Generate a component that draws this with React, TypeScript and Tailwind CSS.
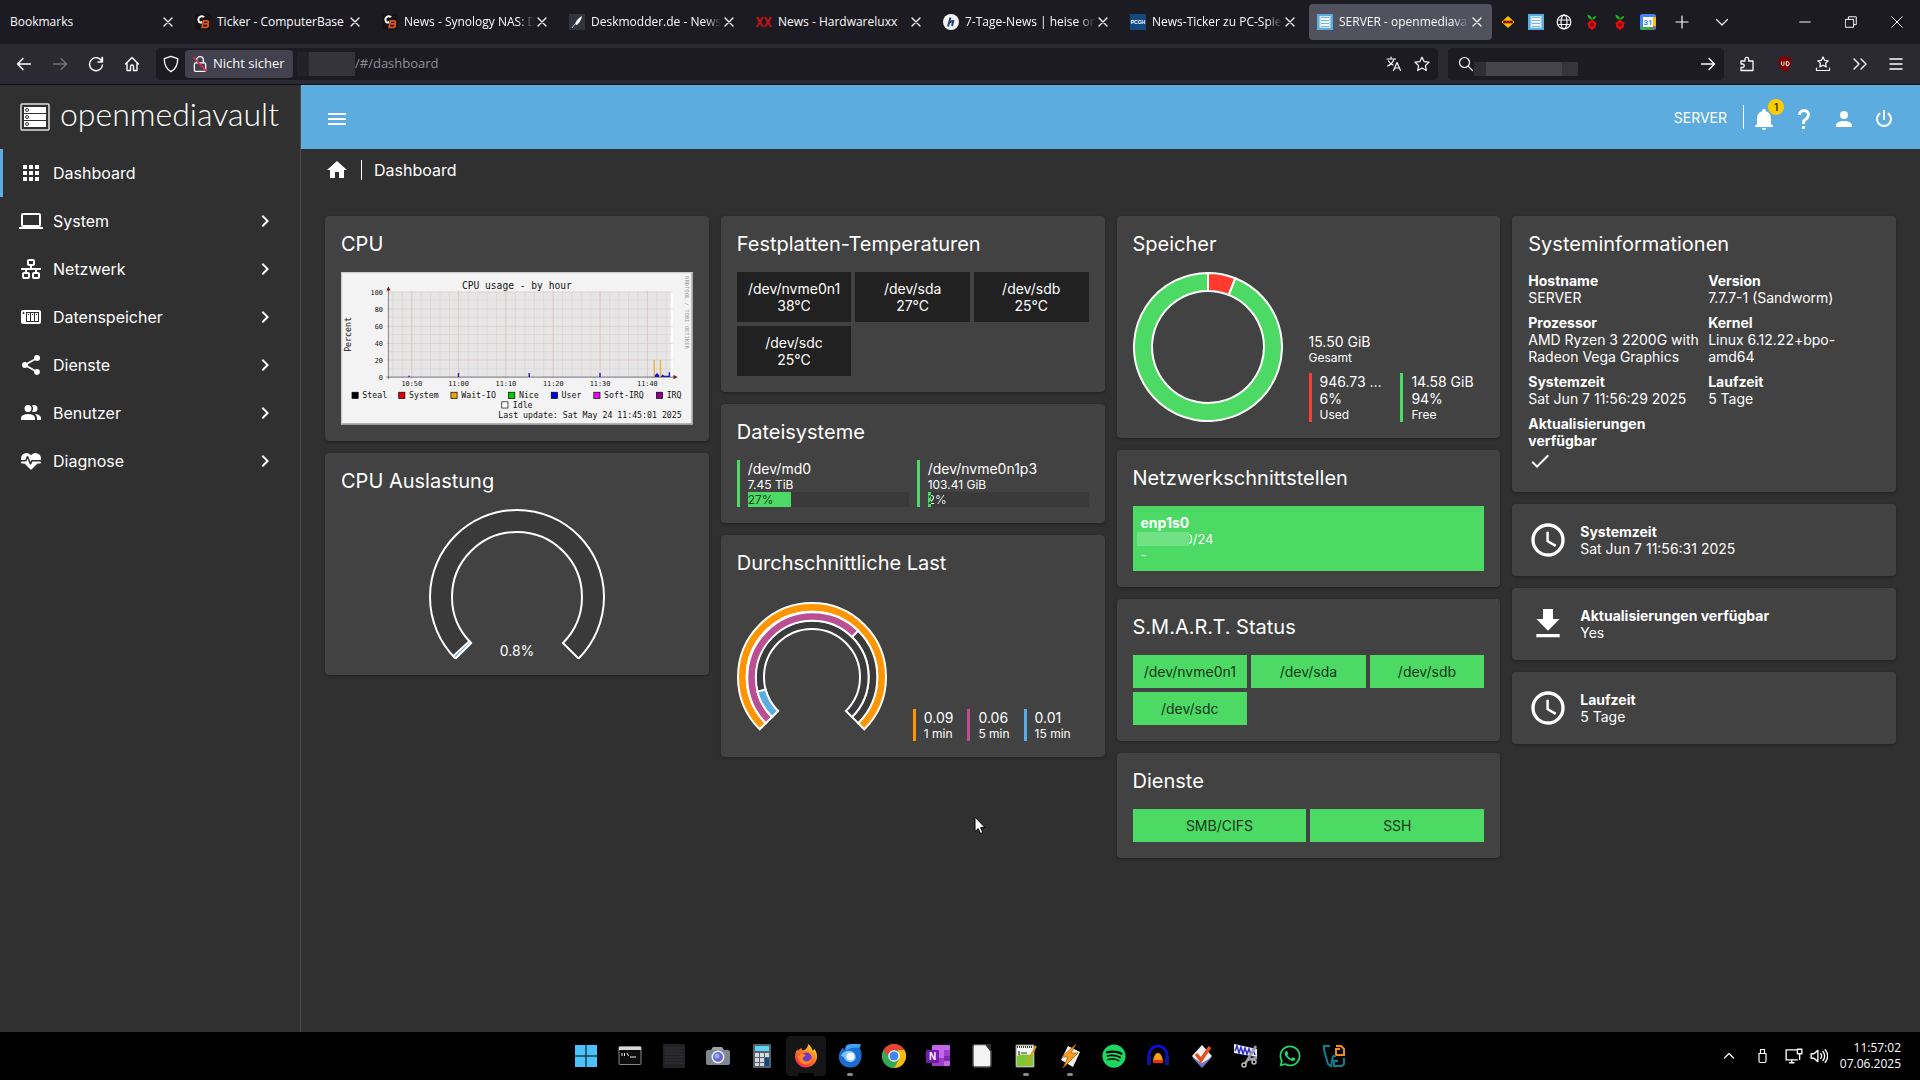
import React from "react";
import { FaSpotify, FaWhatsapp } from "react-icons/fa";

const P = {
  apps: "M16,20H20V16H16M16,14H20V10H16M10,8H14V4H10M16,8H20V4H16M10,14H14V10H10M4,14H8V10H4M4,20H8V16H4M10,20H14V16H10M4,8H8V4H4V8Z",
  laptop: "M4,6H20V16H4M20,18A2,2 0 0,0 22,16V6C22,4.89 21.1,4 20,4H4C2.89,4 2,4.89 2,6V16A2,2 0 0,0 4,18H0V20H24V18H20Z",
  lan: "M10,2C8.89,2 8,2.89 8,4V7C8,8.11 8.89,9 10,9H11V11H2V13H6V15H5C3.89,15 3,15.89 3,17V20C3,21.11 3.89,22 5,22H9C10.11,22 11,21.11 11,20V17C11,15.89 10.11,15 9,15H8V13H16V15H15C13.89,15 13,15.89 13,17V20C13,21.11 13.89,22 15,22H19C20.11,22 21,21.11 21,20V17C21,15.89 20.11,15 19,15H18V13H22V11H13V9H14C15.11,9 16,8.11 16,7V4C16,2.89 15.11,2 14,2H10M10,4H14V7H10V4M5,17H9V20H5V17M15,17H19V20H15V17Z",
  nas: "M4,5C2.89,5 2,5.89 2,7V17C2,18.11 2.89,19 4,19H20C21.11,19 22,18.11 22,17V7C22,5.89 21.11,5 20,5H4M4.5,7A1,1 0 0,1 5.5,8A1,1 0 0,1 4.5,9A1,1 0 0,1 3.5,8A1,1 0 0,1 4.5,7M7,7H20V17H7V7M8,8V16H11V8H8M12,8V16H15V8H12M16,8V16H19V8H16M9,9H10V10H9V9M13,9H14V10H13V9M17,9H18V10H17V9Z",
  share: "M18,16.08C17.24,16.08 16.56,16.38 16.04,16.85L8.91,12.7C8.96,12.47 9,12.24 9,12C9,11.76 8.96,11.53 8.91,11.3L15.96,7.19C16.5,7.69 17.21,8 18,8A3,3 0 0,0 21,5A3,3 0 0,0 18,2A3,3 0 0,0 15,5C15,5.24 15.04,5.47 15.09,5.7L8.04,9.81C7.5,9.31 6.79,9 6,9A3,3 0 0,0 3,12A3,3 0 0,0 6,15C6.79,15 7.5,14.69 8.04,14.19L15.16,18.34C15.11,18.55 15.08,18.77 15.08,19C15.08,20.61 16.39,21.91 18,21.91C19.61,21.91 20.92,20.61 20.92,19A2.92,2.92 0 0,0 18,16.08Z",
  users: "M16 17V19H2V17S2 13 9 13 16 17 16 17M12.5 7.5A3.5 3.5 0 1 0 9 11A3.5 3.5 0 0 0 12.5 7.5M15.94 13A5.32 5.32 0 0 1 18 17V19H22V17S22 13.37 15.94 13M15 4A3.39 3.39 0 0 0 13.07 4.59A5 5 0 0 1 13.07 10.41A3.39 3.39 0 0 0 15 11A3.5 3.5 0 0 0 15 4Z",
  heart: "M7.5,4A5.5,5.5 0 0,0 2,9.5C2,10 2.09,10.5 2.22,11H6.3L7.57,7.63C7.87,6.83 9.05,6.75 9.43,7.63L11.5,13L12.09,11.58C12.22,11.25 12.57,11 13,11H21.78C21.91,10.5 22,10 22,9.5A5.5,5.5 0 0,0 16.5,4C14.64,4 13,4.93 12,6.34C11,4.93 9.36,4 7.5,4V4M3,12.5A1,1 0 0,0 2,13.5A1,1 0 0,0 3,14.5H5.44L11,20C12,20.9 12,20.9 13,20L18.56,14.5H21A1,1 0 0,0 22,13.5A1,1 0 0,0 21,12.5H13.4L12.47,14.8C12.07,15.81 10.92,15.67 10.55,14.83L8.5,9.5L7.54,11.83C7.39,12.21 7.05,12.5 6.6,12.5H3Z",
  chevron: "M8.59,16.58L13.17,12L8.59,7.41L10,6L16,12L10,18L8.59,16.58Z",
  bell: "M21,19V20H3V19L5,17V11C5,7.9 7.03,5.17 10,4.29C10,4.19 10,4.1 10,4A2,2 0 0,1 12,2A2,2 0 0,1 14,4C14,4.1 14,4.19 14,4.29C16.97,5.17 19,7.9 19,11V17L21,19M14,21A2,2 0 0,1 12,23A2,2 0 0,1 10,21",
  help: "M10,19H13V22H10V19M12,2C17.35,2.22 19.68,7.62 16.5,11.67C15.67,12.67 14.33,13.33 13.67,14.17C13,15 13,16 13,17H10C10,15.33 10,13.92 10.67,12.92C11.33,11.92 12.67,11.33 13.5,10.67C15.92,8.43 15.32,5.26 12,5A3,3 0 0,0 9,8H6A6,6 0 0,1 12,2Z",
  account: "M12,4A4,4 0 0,1 16,8A4,4 0 0,1 12,12A4,4 0 0,1 8,8A4,4 0 0,1 12,4M12,14C16.42,14 20,15.79 20,18V20H4V18C4,15.79 7.58,14 12,14Z",
  power: "M16.56,5.44L15.11,6.89C16.84,7.94 18,9.83 18,12A6,6 0 0,1 12,18A6,6 0 0,1 6,12C6,9.83 7.16,7.94 8.88,6.88L7.44,5.44C5.36,6.88 4,9.28 4,12A8,8 0 0,0 12,20A8,8 0 0,0 20,12C20,9.28 18.64,6.88 16.56,5.44M13,3H11V13H13",
  home: "M10,20V14H14V20H19V12H22L12,3L2,12H5V20H10Z",
  menu: "M3,6H21V8H3V6M3,11H21V13H3V11M3,16H21V18H3V16Z",
  check: "M21,7L9,19L3.5,13.5L4.91,12.09L9,16.17L19.59,5.59L21,7Z",
  clock: "M12,20A8,8 0 0,0 20,12A8,8 0 0,0 12,4A8,8 0 0,0 4,12A8,8 0 0,0 12,20M12,2A10,10 0 0,1 22,12A10,10 0 0,1 12,22C6.47,22 2,17.5 2,12A10,10 0 0,1 12,2M12.5,7V12.25L17,14.92L16.25,16.15L11,13V7H12.5Z",
  download: "M5,20H19V18H5M19,9H15V3H9V9H5L12,16L19,9Z",
};

function Mdi({ d, className = "size-6" }: { d: string; className?: string }) {
  return (
    <svg viewBox="0 0 24 24" className={`${className} shrink-0`} fill="currentColor" fillRule="evenodd" aria-hidden="true">
      <path d={d} />
    </svg>
  );
}

function Line({ children, className = "size-4", w = 1.2 }: { children: React.ReactNode; className?: string; w?: number }) {
  return (
    <svg viewBox="0 0 16 16" className={`${className} shrink-0`} fill="none" stroke="currentColor" strokeWidth={w} strokeLinecap="round" strokeLinejoin="round" aria-hidden="true">
      {children}
    </svg>
  );
}

/* ---------- browser chrome ---------- */

const CbIcon = () => (
  <svg viewBox="0 0 16 16" className="size-4 shrink-0" aria-hidden="true">
    <rect width="16" height="16" rx="3" fill="#151515" />
    <path d="M9 3.2C8 1.6 4.6 1.8 3.6 4.4C2.6 7.2 4.4 9.4 7.4 8" fill="none" stroke="#fff" strokeWidth="2" />
    <path d="M8.5 6.8H12.2C14 6.8 13.8 9.4 12 9.8C14 10.2 13.4 13.4 11.4 13.4H7.2Z M9 9.8H12" fill="none" stroke="#e8501e" strokeWidth="1.8" />
  </svg>
);
const FeatherIcon = () => (
  <svg viewBox="0 0 16 16" className="size-4 shrink-0" aria-hidden="true">
    <rect width="16" height="16" fill="#2f343d" />
    <path d="M13 2C9 4 7 7 6 10L8 11C10.5 9 12.500 5.500 13 2Z" fill="#fff" />
    <path d="M6 10L3 14" stroke="#cfd3d8" />
  </svg>
);
const LuxxIcon = () => (
  <svg viewBox="0 0 16 16" className="size-4 shrink-0" fill="none" stroke="#c81414" strokeWidth="2" aria-hidden="true">
    <path d="M1 3L7 13M7 3L1 13M9 3L15 13M15 3L9 13" />
  </svg>
);
const HeiseIcon = () => (
  <svg viewBox="0 0 16 16" className="size-4 shrink-0" aria-hidden="true">
    <circle cx="8" cy="8" r="8" fill="#f4f4f6" />
    <path d="M7.500 3.500L5 12.500M10.500 6L9 12M7 8.500C8 7 10 7 10 8" fill="none" stroke="#23407a" strokeWidth="2" />
  </svg>
);
const PcghIcon = () => (
  <svg viewBox="0 0 16 16" className="size-4 shrink-0" aria-hidden="true">
    <rect width="16" height="16" fill="#124a80" />
    <text x="8" y="10" textAnchor="middle" fontSize="5" fontWeight="bold" fontFamily="Liberation Sans, sans-serif" fill="#fff">PCGH</text>
  </svg>
);
const OmvIcon = () => (
  <svg viewBox="0 0 16 16" className="size-4 shrink-0" aria-hidden="true">
    <rect width="16" height="16" fill="#5dacdf" />
    <rect x="2.500" y="2" width="11" height="12" fill="#cfe6f6" />
    <path d="M4 5H12M4 8H12M4 11H12" stroke="#fff" strokeWidth="1.600" />
    <path d="M4 3.500H12M4 6.500H12M4 9.500H12M4 12.500H12" stroke="#5dacdf" strokeWidth=".8" />
  </svg>
);
const PiIcon = () => (
  <svg viewBox="0 0 16 16" className="size-4" aria-hidden="true">
    <path d="M8 5.500C8 3 6 1 3.500 .5C3.500 3 5 5.500 8 5.500C8.500 3.500 10 2 12 2C12 4 10.500 5.500 8 5.500Z" fill="#18b818" />
    <path d="M8 5.500L12.500 9L11.500 13.500L8 16L4.500 13.500L3.500 9Z" fill="#e01010" />
    <circle cx="8" cy="10.500" r="2" fill="#8c0000" />
  </svg>
);

const tabs = [
  { title: "Bookmarks" },
  { title: "Ticker - ComputerBase", icon: <CbIcon /> },
  { title: "News - Synology NAS: DS", icon: <CbIcon />, fade: true },
  { title: "Deskmodder.de - News zu", icon: <FeatherIcon />, fade: true },
  { title: "News - Hardwareluxx", icon: <LuxxIcon /> },
  { title: "7-Tage-News | heise online", icon: <HeiseIcon />, fade: true },
  { title: "News-Ticker zu PC-Spielen", icon: <PcghIcon />, fade: true },
  { title: "SERVER - openmediavault", icon: <OmvIcon />, fade: true, active: true },
];

const pinned = [
  {
    name: "NVIDIA",
    icon: (
      <svg viewBox="0 0 16 16" className="size-4" aria-hidden="true">
        <path d="M8 2L14.500 8L8 14L1.500 8Z" fill="#f5c400" />
        <path d="M3 6.500H13V9.500H3Z" fill="#d42a10" />
        <path d="M4 9L5 7L6.500 9L8 7L9.500 9L11 7L12 9" stroke="#400" fill="none" />
      </svg>
    ),
  },
  { name: "openmediavault", icon: <OmvIcon /> },
  {
    name: "Web",
    icon: (
      <Line>
        <circle cx="8" cy="8" r="6.800" />
        <ellipse cx="8" cy="8" rx="3" ry="6.800" />
        <path d="M1.500 6H14.500M1.500 10.500H14.500" />
      </Line>
    ),
  },
  { name: "Pi-hole 1", icon: <PiIcon /> },
  { name: "Pi-hole 2", icon: <PiIcon /> },
  {
    name: "Kalender",
    icon: (
      <svg viewBox="0 0 16 16" className="size-4" aria-hidden="true">
        <rect width="16" height="16" rx="2" fill="#4285f4" />
        <path d="M12.500 3H16V12.500H12.500Z" fill="#fbbc04" />
        <path d="M0 12.500H12.500V16H2A2 2 0 0 1 0 14Z" fill="#34a853" />
        <path d="M12.500 12.500H16L12.500 16Z" fill="#ea4335" />
        <rect x="3" y="3" width="10" height="10" fill="#fff" />
        <text x="8" y="11" textAnchor="middle" fontSize="8" fontFamily="Roboto, sans-serif" fontWeight="bold" fill="#4285f4">31</text>
      </svg>
    ),
  },
];

const iconBtn = "flex h-8 w-9 shrink-0 items-center justify-center";

function TabBar() {
  return (
    <div className="flex h-11 items-center bg-[#1c1b22] text-[#fbfbfe]">
      <div className="flex min-w-0 gap-1">
        {tabs.map((t) => (
          <div key={t.title} className={`flex h-9 w-[183px] min-w-0 items-center gap-1.5 rounded pr-[7px] ${t.icon ? "pl-2" : "pl-2.5"} ${t.active ? "bg-[#52525e]" : ""}`}>
            {t.icon}
            <button className={`min-w-0 flex-1 overflow-hidden text-left text-xs whitespace-nowrap ${t.fade ? "[mask-image:linear-gradient(to_right,black_88%,transparent)]" : ""}`}>{t.title}</button>
            <button aria-label="Tab schließen" className="-ml-1.5 flex size-4 shrink-0 items-center justify-center">
              <Line className="size-4" w={1.3}>
                <path d="M4 4L12 12M12 4L4 12" />
              </Line>
            </button>
          </div>
        ))}
      </div>
      <div className="ml-0.5 flex shrink-0">
        {pinned.map((p) => (
          <button key={p.name} aria-label={p.name} className="flex h-9 w-7 items-center justify-center">
            {p.icon}
          </button>
        ))}
      </div>
      <button aria-label="Neuer Tab" className="flex h-9 w-10 shrink-0 items-center justify-center">
        <Line className="size-4">
          <path d="M8 2V14M2 8H14" />
        </Line>
      </button>
      <button aria-label="Alle Tabs" className="flex h-9 w-10 shrink-0 items-center justify-center">
        <Line className="size-4">
          <path d="M2.500 5.500L8 11L13.500 5.500" />
        </Line>
      </button>
      <div className="ml-auto flex shrink-0">
        <button aria-label="Minimieren" className="flex h-9 w-[46px] items-center justify-center">
          <Line className="size-3" w={1.3}><path d="M1 8H15" /></Line>
        </button>
        <button aria-label="Verkleinern" className="flex h-9 w-[46px] items-center justify-center">
          <Line className="size-3" w={1.3}><path d="M1 4.500H11.500V15H1ZM4.500 4.500V1H15V11.500H11.500" /></Line>
        </button>
        <button aria-label="Schließen" className="flex h-9 w-[46px] items-center justify-center">
          <Line className="size-3" w={1.3}><path d="M1 1L15 15M15 1L1 15" /></Line>
        </button>
      </div>
    </div>
  );
}

function Toolbar() {
  return (
    <div className="flex h-[41px] items-center border-b border-[#0c0c18] bg-[#2b2a33] pl-1.5 text-[#fbfbfe]">
      <button aria-label="Zurück" className={iconBtn}><Line w={1.4}><path d="M14.500 8H1.500M7 2.500L1.500 8L7 13.500" /></Line></button>
      <button aria-label="Vor" className={`${iconBtn} text-[#76757e]`}><Line w={1.4}><path d="M1.500 8H14.500M9 2.500L14.500 8L9 13.500" /></Line></button>
      <button aria-label="Neu laden" className={iconBtn}><Line w={1.4}><path d="M14 4V1.500M14.500 1.500V6H10M14 5.500A6.500 6.500 0 1 0 14.500 9" /></Line></button>
      <button aria-label="Startseite" className={iconBtn}><Line w={1.4}><path d="M1.500 8L8 1.500L14.500 8M3 7V14.500H6.500V10.500A1.500 1.500 0 0 1 9.500 10.500V14.500H13V7" /></Line></button>
      <div className="ml-1.5 flex h-8 min-w-0 flex-1 items-center rounded bg-[#1c1b22]">
        <button aria-label="Schutz" className="flex h-7 w-[29px] items-center justify-center"><Line className="size-[18px]"><path d="M8 1.200L14 3.200C14 8.500 12.500 12.500 8 14.800C3.500 12.500 2 8.500 2 3.200Z" /></Line></button>
        <button className="flex h-7 w-[108px] items-center gap-1 rounded bg-[#42414d] pl-1.5 text-[13px] whitespace-nowrap">
          <svg viewBox="0 0 16 16" className="size-[18px] shrink-0" fill="none" stroke="currentColor" strokeWidth="1.200" aria-hidden="true">
            <rect x="3" y="7" width="10" height="7.500" rx="1" />
            <path d="M5 7V4.500A3 3 0 0 1 11 4.500V7" />
            <path d="M2 2L14 14.500" stroke="#e22850" strokeWidth="1.500" />
          </svg>
          Nicht sicher
        </button>
        <span className="ml-1 flex h-6 w-[58px] shrink-0"><span className="w-3 bg-[#222128]" /><span className="flex-1 bg-[#35343a]" /></span>
        <input aria-label="Adresse" defaultValue="/#/dashboard" className="min-w-0 flex-1 bg-transparent text-[13px] text-[#8f8f98] outline-none" />
        <button aria-label="Übersetzen" className="flex h-8 w-7 items-center justify-center">
          <Line><path d="M1 3H9.500M5 1V3M8 3C7 6.500 4 9 1.500 10M2.500 5C4 7.500 5.500 8.500 7 9M7.500 14.500L11 6.500L14.500 14.500M8.800 12H13.200" /></Line>
        </button>
        <button aria-label="Lesezeichen" className="mr-0.5 flex h-8 w-7 items-center justify-center">
          <Line><path d="M8 1.200L10.100 5.600L15 6.200L11.400 9.600L12.300 14.500L8 12.100L3.700 14.500L4.600 9.600L1 6.200L5.900 5.600Z" /></Line>
        </button>
      </div>
      <div className="ml-2.5 flex h-8 w-[276px] items-center rounded bg-[#1c1b22] pr-2 pl-2.5">
        <Line className="size-4"><circle cx="6.500" cy="6.500" r="5" /><path d="M10.300 10.300L14.500 14.500" /></Line>
        <div className="relative min-w-0 flex-1">
          <input aria-label="Suche" className="block w-full bg-transparent text-[13px] outline-none" />
          <span className="pointer-events-none absolute top-2 left-0 flex h-3.5 w-[104px]"><span className="w-3 bg-[#2f2d37]" /><span className="w-[76px] bg-[#45444a]" /><span className="flex-1 bg-[#36353b]" /></span>
        </div>
        <button aria-label="Los" className="flex size-4 items-center justify-center"><Line w={1.4}><path d="M1.500 8H14.500M9 2.500L14.500 8L9 13.500" /></Line></button>
      </div>
      <div className="flex items-center pr-1.5 pl-1">
        <button aria-label="Erweiterungen" className="flex h-8 w-[38px] items-center justify-center">
          <Line w={1.3}><path d="M2 5H6V3.200A1.800 1.800 0 0 1 9.600 3.200V5H14V14.500H2V11.500H3.500A1.700 1.700 0 0 0 3.500 8H2Z" /></Line>
        </button>
        <button aria-label="uBlock" className="flex h-8 w-[38px] items-center justify-center">
          <svg viewBox="0 0 16 16" className="size-4" aria-hidden="true">
            <path d="M8 0L14.500 2.500C14.500 9 13 13 8 16C3 13 1.500 9 1.500 2.500Z" fill="#800000" />
            <path d="M4.500 5.500V8.500A1.300 1.300 0 0 0 7 8.500V5.500M9.300 5.500V9.800H10A2 2 0 0 0 10 5.500Z" fill="none" stroke="#fff" />
          </svg>
        </button>
        <button aria-label="Favoriten" className="flex h-8 w-[38px] items-center justify-center">
          <Line><path d="M8 1L9.600 4.300L13.200 4.800L10.600 7.300L11.200 10.900L8 9.200L4.800 10.900L5.400 7.300L2.800 4.800L6.400 4.300ZM1.500 12V14.500H14.500V12" /></Line>
        </button>
        <button aria-label="Mehr" className={iconBtn}><Line w={1.4}><path d="M2 3L7 8L2 13M9 3L14 8L9 13" /></Line></button>
        <button aria-label="Menü" className={iconBtn}><Line w={1.4}><path d="M2 3H14M2 8H14M2 13H14" /></Line></button>
      </div>
    </div>
  );
}

/* ---------- dashboard ---------- */

const nav = [
  { label: "Dashboard", d: P.apps, active: true },
  { label: "System", d: P.laptop },
  { label: "Netzwerk", d: P.lan },
  { label: "Datenspeicher", d: P.nas },
  { label: "Dienste", d: P.share },
  { label: "Benutzer", d: P.users },
  { label: "Diagnose", d: P.heart },
];

function Sidebar() {
  return (
    <aside className="w-[301px] shrink-0 border-r border-[#4a4a4a]">
      <div className="flex h-16 items-center gap-2.5 pl-5">
        <svg viewBox="0 0 30 28" className="h-7 w-[30px] shrink-0" aria-hidden="true">
          <rect x="1" y="1" width="28" height="26" rx="1" fill="none" stroke="#e0e0e0" strokeWidth="1.500" />
          {[4, 11, 18].map((y) => (
            <g key={y}>
              <rect x="4" y={y} width="22" height="6" fill="#fff" />
              <circle cx="7" cy={y + 3} r="1.500" fill="none" stroke="#303030" />
            </g>
          ))}
        </svg>
        <span className="pb-1.5 font-['Lato',sans-serif] text-[32px] leading-[48px] font-light">openmediavault</span>
      </div>
      <nav>
        {nav.map((n) => (
          <a key={n.label} href={`#/${n.label.toLowerCase()}`} className={`flex h-12 items-center gap-2.5 border-l-[3px] pr-[23px] pl-4 text-base ${n.active ? "border-[#5dacdf]" : "border-transparent"}`}>
            <Mdi d={n.d} />
            <span className="flex-1">{n.label}</span>
            {!n.active && <Mdi d={P.chevron} />}
          </a>
        ))}
      </nav>
    </aside>
  );
}

const headerBtn = "relative mt-1 flex size-10 items-center justify-center";

function Header() {
  return (
    <header className="flex h-16 items-center bg-[#5dacdf] px-4">
      <button aria-label="Menü" className={headerBtn}><Mdi d={P.menu} /></button>
      <span className="mt-0.5 ml-auto pr-4 text-sm">SERVER</span>
      <span className="h-6 w-px bg-white" />
      <button aria-label="Benachrichtigungen" className={headerBtn}>
        <Mdi d={P.bell} />
        <span className="absolute top-0 right-0 flex size-4 items-center justify-center rounded-full bg-[#fc0] text-[10px] font-semibold text-[#3a3000]">1</span>
      </button>
      <button aria-label="Hilfe" className={headerBtn}><Mdi d={P.help} /></button>
      <button aria-label="Konto" className={headerBtn}><Mdi d={P.account} /></button>
      <button aria-label="Ausschalten" className={headerBtn}><Mdi d={P.power} /></button>
    </header>
  );
}

function Card({ title, children }: { title?: string; children: React.ReactNode }) {
  return (
    <section className="rounded bg-[#424242] p-4 shadow-[0_1px_3px_rgba(0,0,0,0.35)]">
      {title && <h2 className="mb-4 text-xl leading-6">{title}</h2>}
      {children}
    </section>
  );
}

/* Ring segment; angles in degrees, clockwise from the top. */
function sector(cx: number, cy: number, r0: number, r1: number, a0: number, a1: number) {
  const pt = (r: number, a: number) => {
    const t = ((a - 90) * Math.PI) / 180;
    return `${(cx + r * Math.cos(t)).toFixed(2)} ${(cy + r * Math.sin(t)).toFixed(2)}`;
  };
  const big = a1 - a0 > 180 ? 1 : 0;
  return `M${pt(r1, a0)}A${r1} ${r1} 0 ${big} 1 ${pt(r1, a1)}L${pt(r0, a1)}A${r0} ${r0} 0 ${big} 0 ${pt(r0, a0)}Z`;
}

const legend = [
  { x: 16, label: "Steal", c: "#000" },
  { x: 84, label: "System", c: "#e00000" },
  { x: 160, label: "Wait-IO", c: "#f0a000" },
  { x: 244, label: "Nice", c: "#00d000" },
  { x: 306, label: "User", c: "#0000e8" },
  { x: 368, label: "Soft-IRQ", c: "#f000f0" },
  { x: 459, label: "IRQ", c: "#900090" },
];

function CpuGraph() {
  const major = [103, 171, 240, 309, 377, 446];
  const times = ["10:50", "11:00", "11:10", "11:20", "11:30", "11:40"];
  const minor = Array.from({ length: 30 }, (_, i) => 75.5 + i * 13.72).filter((x) => x < 480);
  return (
    <svg viewBox="0 0 512 222" className="block w-full" fontFamily="DejaVu Sans Mono, monospace" role="img" aria-label="CPU usage - by hour">
      <rect width="512" height="222" fill="#f3f3f3" />
      <path d="M1 222V1H512" fill="none" stroke="#cfcfcf" strokeWidth="2" />
      <path d="M1 221H511V1" fill="none" stroke="#9e9e9e" strokeWidth="2" />
      <rect x="69" y="29" width="411" height="124" fill="#e6e6e6" />
      <rect x="480" y="29" width="3" height="124" fill="#fff" />
      {minor.map((x) => <path key={x} d={`M${x} 29V153`} stroke="#d9d5d5" strokeWidth="1" />)}
      {[41, 66, 91, 116, 141].map((y) => <path key={y} d={`M69 ${y}H480`} stroke="#dad6d6" strokeWidth="1" />)}
      {major.map((x) => <path key={x} d={`M${x} 27V156`} stroke="#dfc2c2" strokeWidth="1" />)}
      {[29, 54, 79, 104, 128].map((y) => <path key={y} d={`M66 ${y}H483`} stroke="#dfc4c4" strokeWidth="1" />)}
      <path d="M456 153V128M465 153V128" stroke="#f0b040" strokeWidth="2" />
      <path d="M457 153V150L460 147L463 150V153ZM466 153L468 149L471 152V153Z" fill="#1414d8" />
      <path d="M99 153V151M171 153V147M274 153V147M377 153V147M478 153V146M466 152H478" stroke="#1a1ac8" strokeWidth="2" />
      <path d="M69 156V22" stroke="#555" />
      <path d="M66 153H486" stroke="#403048" />
      <path d="M66 27H72L69 21Z M484 150V156L490 153Z" fill="#801818" />
      <g fill="#111">
        <text x="256" y="25" textAnchor="middle" fontSize="14">CPU usage - by hour</text>
        <g fontSize="10">
          {["100", "80", "60", "40", "20", "0"].map((t, i) => (
            <text key={t} x="61" y={[33, 58, 83, 108, 132, 157][i]} textAnchor="end">{t}</text>
          ))}
          {times.map((t, i) => (
            <text key={t} x={major[i]} y="166" textAnchor="middle">{t}</text>
          ))}
        </g>
        <g fontSize="12">
          <text transform="translate(14 91) rotate(-90)" textAnchor="middle">Percent</text>
          {legend.map((l) => (
            <g key={l.label}>
              <rect x={l.x} y="175" width="9" height="9" fill={l.c} stroke="#000" />
              <text x={l.x + 15} y="184">{l.label}</text>
            </g>
          ))}
          <rect x="234" y="189" width="9" height="9" fill="#fff" stroke="#000" />
          <text x="250" y="198">Idle</text>
          <text x="496" y="213" textAnchor="end">Last update: Sat May 24 11:45:01 2025</text>
        </g>
      </g>
      <text transform="translate(500 6) rotate(90)" fontSize="8" fill="#999">RRDTOOL / TOBI OETIKER</text>
    </svg>
  );
}

const gaugeStroke = { stroke: "#fff", strokeWidth: 2 };

function Fs({ name, size, pct }: { name: string; size: string; pct: number }) {
  return (
    <div className="min-w-0 border-l-[3px] border-[#4cd964] pl-2">
      <div className="text-sm leading-[17px]">{name}</div>
      <div className="text-xs leading-[15px]">{size}</div>
      <div className="relative h-[15px] bg-[#3a3a3a]">
        <div className="h-full bg-[#4cd964]" style={{ width: `${pct}%` }} />
        <span
          className="absolute inset-0 bg-clip-text text-xs leading-[15px] text-transparent"
          style={{ backgroundImage: `linear-gradient(to right, #0c3a14 ${pct}%, #fff ${pct}%)` }}
        >
          {pct}%
        </span>
      </div>
    </div>
  );
}

function Stat({ color, lines, label }: { color: string; lines: string[]; label: string }) {
  return (
    <div className={`min-w-0 border-l-[3px] pl-2 ${color}`}>
      {lines.map((l) => <div key={l} className="truncate text-sm leading-[17px]">{l}</div>)}
      <div className="text-xs leading-[15px]">{label}</div>
    </div>
  );
}

function Info({ name, children }: { name: string; children: React.ReactNode }) {
  return (
    <div className="min-w-0">
      <dt className="font-bold">{name}</dt>
      <dd>{children}</dd>
    </div>
  );
}

function MiniCard({ d, name, value }: { d: string; name: string; value: string }) {
  return (
    <Card>
      <div className="flex items-center gap-3">
        <Mdi d={d} className="size-10" />
        <div className="text-sm leading-[17px]">
          <div className="font-bold">{name}</div>
          <div>{value}</div>
        </div>
      </div>
    </Card>
  );
}

const temps = [
  ["/dev/nvme0n1", "38°C"],
  ["/dev/sda", "27°C"],
  ["/dev/sdb", "25°C"],
  ["/dev/sdc", "25°C"],
];
const column = "flex min-w-0 flex-col gap-3";
const greenTile = "bg-[#4cd964] p-2 text-center text-sm leading-[17px] text-[#0f3617]";

function Dashboard() {
  return (
    <div className="grid grid-cols-4 items-start gap-3 px-6 pt-[26px]">
      <div className={column}>
        <Card title="CPU"><CpuGraph /></Card>
        <Card title="CPU Auslastung">
          <svg viewBox="0 0 176 150" className="mx-auto block h-[150px] w-44" role="img" aria-label="CPU Auslastung">
            <path d={sector(88, 88, 65, 87, -135, 135)} fill="#3a3a3a" {...gaugeStroke} />
            <path d={sector(88, 88, 65, 87, -135, -132.8)} fill="#5dacdf" {...gaugeStroke} strokeLinejoin="bevel" />
            <text x="88" y="147" textAnchor="middle" fontSize="14" fill="#fff">0.8%</text>
          </svg>
        </Card>
      </div>

      <div className={column}>
        <Card title="Festplatten-Temperaturen">
          <div className="grid grid-cols-3 gap-1">
            {temps.map(([n, t]) => (
              <div key={n} className="bg-[#212121] p-2 text-center text-sm leading-[17px]">
                <div>{n}</div>
                <div>{t}</div>
              </div>
            ))}
          </div>
        </Card>
        <Card title="Dateisysteme">
          <div className="grid grid-cols-2 gap-2">
            <Fs name="/dev/md0" size="7.45 TiB" pct={27} />
            <Fs name="/dev/nvme0n1p3" size="103.41 GiB" pct={2} />
          </div>
        </Card>
        <Card title="Durchschnittliche Last">
          <div className="flex items-end">
            <svg viewBox="0 0 150 150" className="size-[150px] shrink-0" role="img" aria-label="Durchschnittliche Last">
              <path d={sector(75, 86, 65.3, 74, -135, 135)} fill="#ff9500" {...gaugeStroke} />
              <path d={sector(75, 86, 56.6, 65.3, -135, 135)} fill="#3a3a3a" {...gaugeStroke} />
              <path d={sector(75, 86, 48, 56.6, -135, 135)} fill="#3a3a3a" {...gaugeStroke} />
              <path d={sector(75, 86, 56.6, 65.3, -135, 45)} fill="#ba4f93" {...gaugeStroke} />
              <path d={sector(75, 86, 48, 56.6, -135, -105)} fill="#5dacdf" {...gaugeStroke} />
            </svg>
            <div className="ml-[26px] flex gap-3.5">
              <Stat color="border-[#ff9500]" lines={["0.09"]} label="1 min" />
              <Stat color="border-[#ba4f93]" lines={["0.06"]} label="5 min" />
              <Stat color="border-[#5dacdf]" lines={["0.01"]} label="15 min" />
            </div>
          </div>
        </Card>
      </div>

      <div className={column}>
        <Card title="Speicher">
          <div className="flex items-end">
            <svg viewBox="0 0 150 150" className="size-[150px] shrink-0" role="img" aria-label="Speicher">
              <path d={sector(75, 75, 56, 74, 21.6, 360)} fill="#4cd964" {...gaugeStroke} />
              <path d={sector(75, 75, 56, 74, 0, 21.6)} fill="#ff3b30" {...gaugeStroke} />
            </svg>
            <div className="ml-[26px] min-w-0 flex-1">
              <div className="text-sm leading-[17px]">15.50 GiB</div>
              <div className="text-xs leading-[15px]">Gesamt</div>
              <div className="mt-2 grid grid-cols-2 gap-2">
                <Stat color="border-[#ff3b30]" lines={["946.73 MiB", "6%"]} label="Used" />
                <Stat color="border-[#4cd964]" lines={["14.58 GiB", "94%"]} label="Free" />
              </div>
            </div>
          </div>
        </Card>
        <Card title="Netzwerkschnittstellen">
          <div className="bg-[#4cd964] p-2 text-[13px] leading-4">
            <div className="text-sm leading-[17px] font-bold">enp1s0</div>
            <div className="flex items-center"><span className="z-10 -mr-1 -ml-1 h-3.5 w-[52px] bg-[#72e186]" />0/24</div>
            <div>-</div>
          </div>
        </Card>
        <Card title="S.M.A.R.T. Status">
          <div className="grid grid-cols-3 gap-1">
            {temps.map(([n]) => <div key={n} className={greenTile}>{n}</div>)}
          </div>
        </Card>
        <Card title="Dienste">
          <div className="grid grid-cols-2 gap-1">
            <div className={greenTile}>SMB/CIFS</div>
            <div className={greenTile}>SSH</div>
          </div>
        </Card>
      </div>

      <div className={column}>
        <Card title="Systeminformationen">
          <dl className="grid grid-cols-2 gap-2 text-sm leading-[17px]">
            <Info name="Hostname">SERVER</Info>
            <Info name="Version">7.7.7-1 (Sandworm)</Info>
            <Info name="Prozessor">AMD Ryzen 3 2200G with Radeon Vega Graphics</Info>
            <Info name="Kernel">Linux 6.12.22+bpo-amd64</Info>
            <Info name="Systemzeit">Sat Jun 7 11:56:29 2025</Info>
            <Info name="Laufzeit">5 Tage</Info>
            <Info name="Aktualisierungen verfügbar">
              <span className="flex h-[27px] items-start"><Mdi d={P.check} /></span>
            </Info>
          </dl>
        </Card>
        <MiniCard d={P.clock} name="Systemzeit" value="Sat Jun 7 11:56:31 2025" />
        <MiniCard d={P.download} name="Aktualisierungen verfügbar" value="Yes" />
        <MiniCard d={P.clock} name="Laufzeit" value="5 Tage" />
      </div>
    </div>
  );
}

/* ---------- taskbar ---------- */

function G({ children }: { children: React.ReactNode }) {
  return <svg viewBox="0 0 24 24" className="size-6" aria-hidden="true">{children}</svg>;
}

const apps: { name: string; state?: "active" | "open"; icon: React.ReactNode }[] = [
  { name: "Start", icon: <G><path d="M1 1H11.500V11.500H1ZM12.500 1H23V11.500H12.500ZM1 12.500H11.500V23H1ZM12.500 12.500H23V23H12.500Z" fill="#4cc2fb" /></G> },
  { name: "Terminal", icon: <G><rect x="1" y="2.500" width="22" height="18" rx="1" fill="#0c0c0c" stroke="#8a8a8a" /><path d="M1 3H23V6H1Z" fill="#d8d8d8" /><path d="M4 9V12M6.500 9V12M9 9L10.500 12M12 13H18" stroke="#eee" /></G> },
  { name: "Server", icon: <G><rect x="1" y="0" width="22" height="24" fill="#222226" /><path d="M3 4H21M3 7H21M3 10H21M3 13H21M3 16H21M3 19H21" stroke="#303036" /></G> },
  { name: "Kamera", icon: <G><rect x="0" y="6" width="24" height="15" rx="2" fill="#7c8790" /><path d="M7 3H16L18 6H5Z" fill="#9aa4ac" /><circle cx="12" cy="13" r="6.500" fill="#f2f2f4" /><circle cx="12" cy="13" r="5" fill="#7464d8" /><circle cx="11" cy="12" r="2.500" fill="#86b4ff" /></G> },
  { name: "Rechner", icon: <G><rect x="3" y="0" width="18" height="24" rx="1" fill="#55606a" /><rect x="5" y="2" width="14" height="5" fill="#5cd6f4" /><path d="M5 9H9V13H5ZM10 9H14V13H10ZM15 9H19V13H15ZM5 14H9V18H5ZM10 14H14V18H10ZM5 19H9V22H5ZM10 19H14V22H10Z" fill="#d6dade" /><path d="M15 14H19V22H15Z" fill="#124a82" /></G> },
  {
    name: "Firefox",
    state: "active",
    icon: (
      <G>
        <defs><linearGradient id="ff" x1="0.8" y1="0" x2="0.2" y2="1"><stop offset="0" stopColor="#ffe226" /><stop offset=".45" stopColor="#ff7a1f" /><stop offset="1" stopColor="#f0205c" /></linearGradient></defs>
        <path d="M14 0C17 2 18 4.500 18.500 6.500C20 6.500 20 5 20 4.500C22.500 7.500 23.500 11 23 14C22 20 17 23.500 12 23.500C5.500 23.500 1 18.500 1 12.500C1 9.500 2 7 3.500 5C3.500 5.500 3.500 6.500 4 7C5 5.500 6 4.500 7.500 4C7.500 5 7.500 6 9 6.500C11 6 14 4 14 0Z" fill="url(#ff)" />
        <circle cx="12.500" cy="13.500" r="5" fill="#7438c8" />
        <path d="M4 12C7 9 10 10 12 11.500C10 12.500 9 13 8.500 15C10 18.500 15.500 18 17 14.500C18 19 14 21 11 20.500C6.500 20 4 16 4 12Z" fill="#ff8a26" />
      </G>
    ),
  },
  { name: "Thunderbird", state: "open", icon: <G><path d="M9 1C15 -1 20 1 23 0C22 2 22 3 21.500 4C23 6 24 9 23.500 13C22.500 20 18 24 12 23.500C5 23.500 0 18 1 11C2 7 4 4 5.500 3.500C5.500 5 6 5.500 7 6C7 4 8 2 9 1Z" fill="#1c6cd0" /><path d="M9 1C15 -1 20 1 23 0C22 2 22 3 21.500 4C17 3 12 4 8 6.500C7 4 8 2 9 1Z" fill="#3fa4f2" /><path d="M3 12C4 8 9 6 13 7C17 8 18.500 12 17.500 15C16 19 10 19 7.500 16C6 14 5 12 3 12Z" fill="#7cc4f8" /><circle cx="12.500" cy="12.500" r="4" fill="#f0f7fe" /></G> },
  { name: "Chrome", icon: <G><circle cx="12" cy="12" r="12" fill="#34a853" /><path d="M22.400 6A12 12 0 0 1 12 24L17.200 15L16 7V6Z" fill="#fbbc05" /><path d="M1.600 6A12 12 0 0 1 22.400 6H12L6 12Z" fill="#ea4335" /><path d="M1.600 6A12 12 0 0 0 12 24L17 15L7 15Z" fill="#34a853" /><circle cx="12" cy="12" r="5.800" fill="#fff" /><circle cx="12" cy="12" r="4.500" fill="#4285f4" /></G> },
  { name: "OneNote", icon: <G><rect x="6" y="1" width="18" height="21" rx="1" fill="#c565e8" /><path d="M18 6H24V12H18ZM6 14H18V22H6Z" fill="#9a3fc8" /><path d="M18 12H24V17H18Z" fill="#7a2ba8" /><rect x="0" y="6" width="13" height="13" rx="1" fill="#7719aa" /><text x="6.500" y="16" textAnchor="middle" fontSize="10" fontWeight="bold" fontFamily="Liberation Sans, sans-serif" fill="#fff">N</text></G> },
  { name: "LibreOffice", icon: <G><path d="M5 0.500H16L21 7V21A2 2 0 0 1 19 23H5A2 2 0 0 1 3 21V2.500A2 2 0 0 1 5 .5Z" fill="#f4f4f4" stroke="#4a4a4a" strokeWidth="1.500" /><path d="M15 0H21V8Z" fill="#303030" /></G> },
  { name: "Notepad++", state: "open", icon: <G><path d="M2 1H20V23H2Z" fill="#f4f8f0" stroke="#8a8a8a" /><path d="M3 12C8 9 14 12 19 10V22H3Z" fill="#7cc832" /><path d="M5 7V11M7 9H13" stroke="#333" strokeWidth="1.200" /><path d="M22 2L14 17L13 20" stroke="#d8a020" strokeWidth="2" /><path d="M3 3H19" stroke="#333" strokeDasharray="1 1" strokeWidth="2" /></G> },
  { name: "Winamp", state: "open", icon: <G><path d="M10 2L22 8L15 23L3 16Z" fill="#f2f2f2" /><path d="M18 0L4 13H10L5 24L20 9H13Z" fill="#ff9a1a" stroke="#a85800" strokeWidth=".7" /></G> },
  { name: "Spotify", icon: <FaSpotify className="size-6 text-[#1ed760]" /> },
  { name: "Audacity", icon: <G><path d="M3 15C2 5 8 2 12 2C16 2 22 5 21 15" fill="none" stroke="#0b10c8" strokeWidth="3" /><path d="M1 12H5V21H1ZM19 12H23V21H19Z" fill="#10149c" /><path d="M7 19C7 14 9 9 12 9C15 9 17 14 17 19Z" fill="#ff9e10" /><path d="M7 16H17V19H7Z" fill="#e83010" /></G> },
  { name: "Aufgaben", icon: <G><path d="M12 1L22 12L12 23L2 12Z" fill="#f0f0f4" /><path d="M2 13L12 24L22 13L12 19Z" fill="#7478c0" /><path d="M6 10L11 16L20 3" fill="none" stroke="#e8501a" strokeWidth="3.500" /></G> },
  { name: "Schnitt", icon: <G><path d="M0 0L23 5V13L0 9Z" fill="#eeeef8" /><path d="M1 7L3 2L5 9L7 3L9 10L11 4L13 10L15 5L17 11L19 6L21 11" fill="none" stroke="#3030c8" strokeWidth="1.500" /><path d="M22 2L11 20M13 16L23 14" stroke="#a0a0a8" strokeWidth="2.500" /><circle cx="10" cy="21" r="2" fill="none" stroke="#bbb" strokeWidth="1.500" /><circle cx="20" cy="18" r="2" fill="none" stroke="#bbb" strokeWidth="1.500" /></G> },
  { name: "WhatsApp", icon: <FaWhatsapp className="size-6 text-[#25d366]" /> },
  { name: "VNC", icon: <G><path d="M8 2H2V6L6 20L9 22L11 12" fill="none" stroke="#0c7f94" strokeWidth="2" /><path d="M14 2H19L22 5V11H14V5H18" fill="none" stroke="#f08a24" strokeWidth="2" /><path d="M11 12H14M22 14V20L20 22H12V17H16" fill="none" stroke="#0c7f94" strokeWidth="2" /></G> },
];

function Taskbar() {
  return (
    <footer className="grid h-12 grid-cols-[1fr_auto_1fr] items-center bg-black">
      <span />
      <div className="flex gap-1">
        {apps.map((a) => (
          <button key={a.name} aria-label={a.name} className={`relative flex size-10 items-center justify-center rounded ${a.state === "active" ? "bg-[#161616]" : ""}`}>
            {a.icon}
            {a.state === "open" && <span className="absolute bottom-0 h-[3px] w-1.5 rounded-full bg-[#8a8a8a]" />}
            {a.state === "active" && <span className="absolute bottom-0 h-[3px] w-4 rounded-full bg-black" />}
          </button>
        ))}
      </div>
      <div className="flex items-center justify-end pr-[19px] text-white">
        <button aria-label="Ausgeblendete Symbole" className="mr-[18px]"><Line><path d="M3.500 10L8 5.500L12.500 10" /></Line></button>
        <button aria-label="USB" className="mr-3.5"><Line><path d="M4 5.500H11V13A1.500 1.500 0 0 1 9.500 14.500H5.500A1.500 1.500 0 0 1 4 13ZM5.500 5.500V1.500H9.500V5.500" /></Line></button>
        <button aria-label="Netzwerk" className="mr-[7px]"><Line className="size-[18px]"><path d="M11 11.500H1V2.500H11M4 14H8M6 11.500V14M11 2H15V6H11ZM13 6V11" /></Line></button>
        <button aria-label="Lautstärke" className="mr-3"><Line className="size-[18px]"><path d="M1 6H3.500L7 3V13L3.500 10H1ZM9.500 6A3 3 0 0 1 9.500 10M11.500 4A6 6 0 0 1 11.500 12M13.500 2.500A8 8 0 0 1 13.500 13.500" /></Line></button>
        <div className="text-right text-xs leading-4">
          <div>11:57:02</div>
          <div>07.06.2025</div>
        </div>
      </div>
    </footer>
  );
}

export default function App() {
  return (
    <div className="flex min-h-screen flex-col bg-[#303030] font-['Open_Sans',sans-serif] text-white">
      <TabBar />
      <Toolbar />
      <div className="relative flex flex-1 font-['Inter',sans-serif]">
        <Sidebar />
        <main className="min-w-0 flex-1">
          <Header />
          <div className="flex h-[41px] items-center px-6 text-base">
            <a href="#/" aria-label="Startseite"><Mdi d={P.home} /></a>
            <span className="mx-3 h-5 w-px bg-white" />
            <span>Dashboard</span>
          </div>
          <Dashboard />
        </main>
        <svg viewBox="0 0 12 19" className="absolute top-[731px] left-[974px] h-[19px] w-3" aria-hidden="true">
          <path d="M1 1V15.500L4.300 12.500L6.500 17.500L8.800 16.500L6.700 11.600H11Z" fill="#fff" stroke="#000" />
        </svg>
      </div>
      <Taskbar />
    </div>
  );
}
